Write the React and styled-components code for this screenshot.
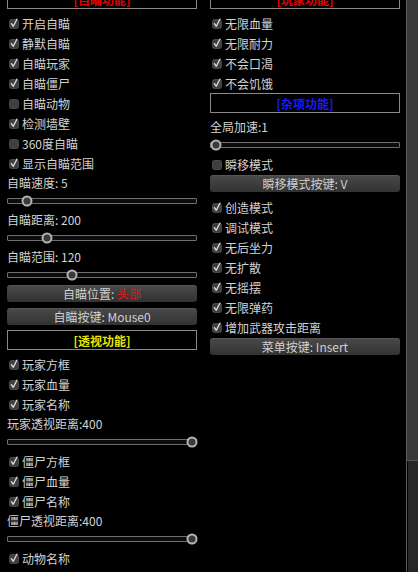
import React from "react";
import styled, { createGlobalStyle } from "styled-components";

const GlobalStyle = createGlobalStyle`
  html, body { margin: 0; padding: 0; background: #000; }
  body { font-family: "Noto Sans CJK SC", "Noto Sans", sans-serif; }
`;

const Window = styled.div`
  width: 418px;
  height: 572px;
  display: flex;
  overflow: hidden;
  background: #000;
`;

const Content = styled.div`
  flex: 1;
  display: flex;
  align-items: flex-start;
  gap: 13px;
  padding-left: 7px;
  margin-top: -11px;
`;

const Column = styled.div`
  width: 190px;
  flex-shrink: 0;
  display: flex;
  flex-direction: column;
`;

const Header = styled.div`
  height: 20px;
  box-sizing: border-box;
  border: 1px solid #8a8a8a;
  display: flex;
  align-items: center;
  justify-content: center;
  color: ${(p) => p.$color};
  font-size: 12px;
  font-weight: bold;
  margin-bottom: 4px;
`;

const Row = styled.div`
  height: 20px;
  display: flex;
  align-items: center;
  gap: 3px;
  padding-left: 2px;
  color: #d2d2d2;
  font-size: 12px;
  white-space: nowrap;
`;

const Label = styled.div`
  height: 19px;
  display: flex;
  align-items: center;
  color: #d2d2d2;
  font-size: 12px;
  white-space: nowrap;
`;

const SliderRow = styled.div`
  height: 18px;
  display: flex;
  align-items: center;
`;

const Track = styled.div`
  position: relative;
  width: 100%;
  height: 6px;
  box-sizing: border-box;
  border: 1px solid #6e6e6e;
  background: #0c0c0c;
  border-radius: 1px;
`;

const Knob = styled.div`
  position: absolute;
  top: 50%;
  width: 11px;
  height: 11px;
  box-sizing: border-box;
  border-radius: 50%;
  border: 2px solid #b4b4b4;
  background: #3a3a3a;
  transform: translate(-50%, -50%);
`;

const Button = styled.div`
  height: 17px;
  margin: 1px 0 5px;
  box-sizing: border-box;
  border-radius: 3px;
  background: linear-gradient(#4a4a4a, #323232);
  box-shadow: inset 0 1px 0 rgba(255, 255, 255, 0.07), 0 1px 0 rgba(0, 0, 0, 0.6);
  display: flex;
  align-items: center;
  justify-content: center;
  color: #d0d0d0;
  font-size: 12px;
  white-space: nowrap;
`;

const Accent = styled.span`
  color: #e81414;
`;

const ScrollBar = styled.div`
  width: 12px;
  flex-shrink: 0;
  box-sizing: border-box;
  border-left: 1px solid #5e5e5e;
  display: flex;
  flex-direction: column;
`;

const ScrollThumb = styled.div`
  height: 461px;
  box-sizing: border-box;
  background: #3a3a3a;
  border-bottom: 1px solid #565656;
`;

const ScrollTrack = styled.div`
  flex: 1;
  background: #262626;
  border-left: 1px solid #000;
`;

function Check({ on }) {
  return (
    <svg width="10" height="11" viewBox="0 0 10 11">
      <rect x="0.5" y="1.5" width="9" height="9" rx="2" fill="#3f3f3f" stroke="#484848" />
      {on && (
        <path d="M2.4 5.6 L4.3 8.3 L7.9 1.2" fill="none" stroke="#dedede" strokeWidth="1.3" strokeLinecap="round" strokeLinejoin="round" />
      )}
    </svg>
  );
}

function CheckRow({ on = true, children }) {
  return (
    <Row>
      <Check on={on} />
      <span>{children}</span>
    </Row>
  );
}

function Slider({ frac }) {
  return (
    <SliderRow>
      <Track>
        <Knob style={{ left: `${4 + frac * 180}px` }} />
      </Track>
    </SliderRow>
  );
}

export default function App() {
  return (
    <>
      <GlobalStyle />
      <Window>
        <Content>
          <Column>
            <Header $color="#e60000">[自瞄功能]</Header>
            <CheckRow>开启自瞄</CheckRow>
            <CheckRow>静默自瞄</CheckRow>
            <CheckRow>自瞄玩家</CheckRow>
            <CheckRow>自瞄僵尸</CheckRow>
            <CheckRow on={false}>自瞄动物</CheckRow>
            <CheckRow>检测墙壁</CheckRow>
            <CheckRow on={false}>360度自瞄</CheckRow>
            <CheckRow>显示自瞄范围</CheckRow>
            <Label>自瞄速度: 5</Label>
            <Slider frac={0.083} />
            <Label>自瞄距离: 200</Label>
            <Slider frac={0.194} />
            <Label>自瞄范围: 120</Label>
            <Slider frac={0.333} />
            <Button>
              自瞄位置:&nbsp;<Accent>头部</Accent>
            </Button>
            <Button>自瞄按键: Mouse0</Button>
            <Header $color="#e8e800">[透视功能]</Header>
            <CheckRow>玩家方框</CheckRow>
            <CheckRow>玩家血量</CheckRow>
            <CheckRow>玩家名称</CheckRow>
            <Label>玩家透视距离:400</Label>
            <Slider frac={1} />
            <CheckRow>僵尸方框</CheckRow>
            <CheckRow>僵尸血量</CheckRow>
            <CheckRow>僵尸名称</CheckRow>
            <Label>僵尸透视距离:400</Label>
            <Slider frac={1} />
            <CheckRow>动物名称</CheckRow>
            <Label>动物透视距离:400</Label>
            <Slider frac={1} />
          </Column>
          <Column>
            <Header $color="#e60000">[玩家功能]</Header>
            <CheckRow>无限血量</CheckRow>
            <CheckRow>无限耐力</CheckRow>
            <CheckRow>不会口渴</CheckRow>
            <CheckRow>不会饥饿</CheckRow>
            <Header $color="#1a1aff">[杂项功能]</Header>
            <Label>全局加速:1</Label>
            <Slider frac={0.005} />
            <CheckRow on={false}>瞬移模式</CheckRow>
            <Button>瞬移模式按键: V</Button>
            <CheckRow>创造模式</CheckRow>
            <CheckRow>调试模式</CheckRow>
            <CheckRow>无后坐力</CheckRow>
            <CheckRow>无扩散</CheckRow>
            <CheckRow>无摇摆</CheckRow>
            <CheckRow>无限弹药</CheckRow>
            <CheckRow>增加武器攻击距离</CheckRow>
            <Button>菜单按键: Insert</Button>
          </Column>
        </Content>
        <ScrollBar>
          <ScrollThumb />
          <ScrollTrack />
        </ScrollBar>
      </Window>
    </>
  );
}
